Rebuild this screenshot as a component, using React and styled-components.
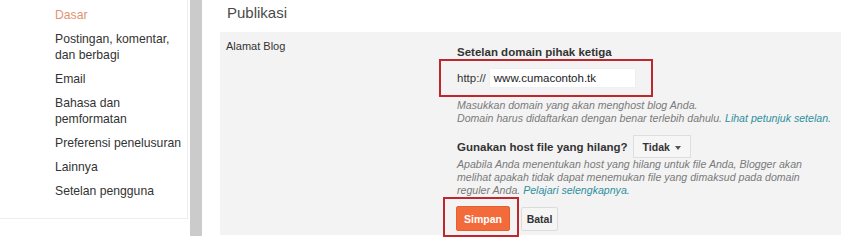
import React from "react";
import styled, { createGlobalStyle } from "styled-components";

const GlobalStyle = createGlobalStyle`
  html, body { margin: 0; padding: 0; background: #fff; }
  body { font-family: "Liberation Sans", Arial, sans-serif; color: #333; }
`;

const Layout = styled.div`
  display: flex;
  align-items: flex-start;
  width: 850px;
  height: 249px;
  overflow: hidden;
`;

const Sidebar = styled.nav`
  flex-shrink: 0;
  box-sizing: border-box;
  width: 188px;
  height: 219px;
  border-right: 1px solid #ededed;
  border-bottom: 1px solid #ededed;
  padding: 7px 0 0 55px;
`;

const NavList = styled.ul`
  list-style: none;
  margin: 0;
  padding: 0;
  width: 132px;
`;

const NavItem = styled.li`
  font-size: 12.2px;
  line-height: 16px;
  margin-bottom: 8px;
  color: ${(p) => (p.$active ? "#e3936f" : "#333")};
`;

const ScrollStrip = styled.div`
  flex-shrink: 0;
  width: 12px;
  height: 236px;
  margin-left: 2px;
  background: #cbcbcb;
`;

const Main = styled.main`
  flex: 1;
  padding: 0 9px 0 18px;
`;

const Title = styled.h1`
  margin: 0 0 6px 0;
  font-size: 15px;
  font-weight: normal;
  line-height: 26px;
  color: #4a4a4a;
  padding-left: 7px;
`;

const Panel = styled.section`
  box-sizing: border-box;
  height: 203px;
  background: #f3f3f3;
  display: grid;
  grid-template-columns: 231px 1fr;
  padding: 7px 0 0 6px;
`;

const Label = styled.div`
  font-size: 11px;
  line-height: 14px;
  color: #333;
`;

const Column = styled.div`
  padding-top: 6px;
`;

const Heading = styled.div`
  font-size: 11.5px;
  font-weight: bold;
  line-height: 14px;
  color: #333;
`;

const Highlight = styled.div`
  box-sizing: border-box;
  border: 2px solid #c0262e;
`;

const DomainBox = styled(Highlight)`
  display: flex;
  align-items: center;
  gap: 3px;
  width: 214px;
  height: 38px;
  margin-left: -18px;
  padding-left: 16px;
`;

const Prefix = styled.span`
  font-size: 11.5px;
  color: #333;
`;

const DomainInput = styled.div`
  box-sizing: border-box;
  width: 147px;
  height: 20px;
  background: #fff;
  border: 1px solid #f0f0f0;
  padding-left: 4px;
  font-size: 11.5px;
  line-height: 18px;
  color: #222;
`;

const Help = styled.div`
  margin-top: ${(p) => p.$mt || 0}px;
  font-size: 10.6px;
  font-style: italic;
  line-height: 13px;
  color: #7a7a7a;
  white-space: nowrap;
`;

const Line = styled.span`
  display: block;
`;

const Link = styled.a`
  color: #2f8f9d;
  text-decoration: none;
`;

const QuestionRow = styled.div`
  display: flex;
  align-items: center;
  gap: 5px;
  margin-top: 10px;
`;

const Dropdown = styled.div`
  box-sizing: border-box;
  width: 58px;
  height: 23px;
  display: flex;
  align-items: center;
  justify-content: space-between;
  padding: 0 9px;
  background: #f6f6f6;
  border: 1px solid #dedede;
  font-size: 10.5px;
  font-weight: bold;
  color: #333;
`;

const Caret = styled.span`
  width: 0;
  height: 0;
  border-left: 3px solid transparent;
  border-right: 3px solid transparent;
  border-top: 4px solid #555;
  margin-top: 2px;
`;

const ButtonRow = styled.div`
  display: flex;
  align-items: flex-start;
  margin-left: -14px;
`;

const SaveFrame = styled(Highlight)`
  padding: 7px 7px 4px 11px;
`;

const Button = styled.button`
  box-sizing: border-box;
  height: ${(p) => (p.$primary ? 25 : 24)}px;
  width: ${(p) => (p.$primary ? 54 : 37)}px;
  margin: 0;
  padding: 0;
  font-family: inherit;
  font-size: 10.5px;
  font-weight: bold;
  border-radius: 2px;
  border: 1px solid ${(p) => (p.$primary ? "#e55f2f" : "#dcdcdc")};
  background: ${(p) => (p.$primary ? "#f46b3b" : "#f5f5f5")};
  color: ${(p) => (p.$primary ? "#fff" : "#333")};
  margin-top: ${(p) => (p.$primary ? 0 : 10)}px;
  margin-left: ${(p) => (p.$primary ? 0 : 2)}px;
`;

const navItems = [
  "Dasar",
  "Postingan, komentar, dan berbagi",
  "Email",
  "Bahasa dan pemformatan",
  "Preferensi penelusuran",
  "Lainnya",
  "Setelan pengguna",
];

export default function App() {
  return (
    <>
      <GlobalStyle />
      <Layout>
        <Sidebar>
          <NavList>
            {navItems.map((item, i) => (
              <NavItem key={item} $active={i === 0}>
                {item}
              </NavItem>
            ))}
          </NavList>
        </Sidebar>
        <ScrollStrip />
        <Main>
          <Title>Publikasi</Title>
          <Panel>
            <Label>Alamat Blog</Label>
            <Column>
              <Heading>Setelan domain pihak ketiga</Heading>
              <DomainBox>
                <Prefix>http://</Prefix>
                <DomainInput>www.cumacontoh.tk</DomainInput>
              </DomainBox>
              <Help $mt={2}>
                <Line>Masukkan domain yang akan menghost blog Anda.</Line>
                <Line>
                  Domain harus didaftarkan dengan benar terlebih dahulu.{" "}
                  <Link>Lihat petunjuk setelan.</Link>
                </Line>
              </Help>
              <QuestionRow>
                <Heading>Gunakan host file yang hilang?</Heading>
                <Dropdown>
                  Tidak <Caret />
                </Dropdown>
              </QuestionRow>
              <Help>
                <Line>
                  Apabila Anda menentukan host yang hilang untuk file Anda, Blogger akan
                </Line>
                <Line>
                  melihat apakah tidak dapat menemukan file yang dimaksud pada domain
                </Line>
                <Line>
                  reguler Anda. <Link>Pelajari selengkapnya.</Link>
                </Line>
              </Help>
              <ButtonRow>
                <SaveFrame>
                  <Button $primary>Simpan</Button>
                </SaveFrame>
                <Button>Batal</Button>
              </ButtonRow>
            </Column>
          </Panel>
        </Main>
      </Layout>
    </>
  );
}
